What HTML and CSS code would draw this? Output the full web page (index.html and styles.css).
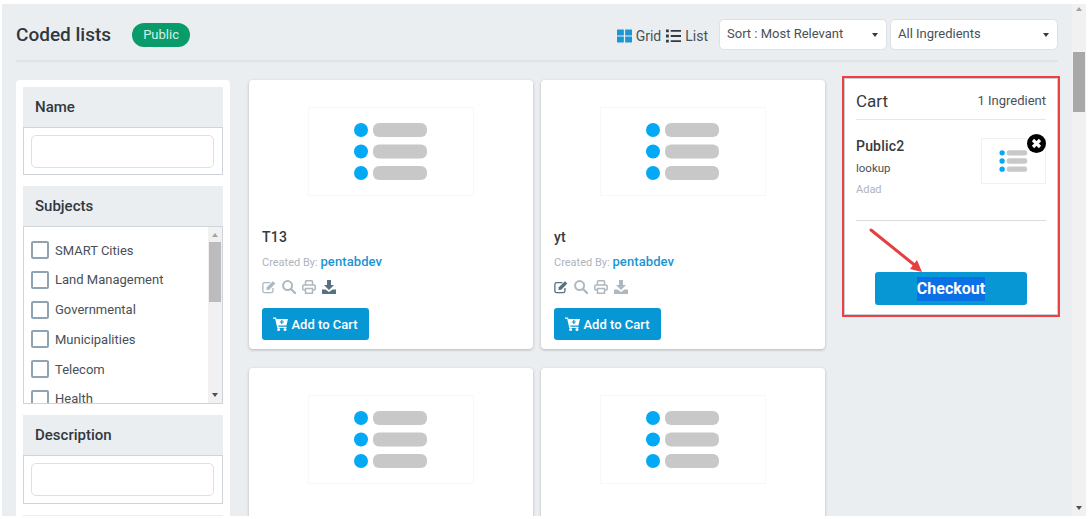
FILE: index.html
```html
<!DOCTYPE html>
<html lang="en">
<head>
<meta charset="utf-8">
<title>Coded lists</title>
<link rel="stylesheet" href="styles.css">
</head>
<body>
<svg class="defs" width="0" height="0" aria-hidden="true">
  <symbol id="thumb" viewBox="0 0 166 89">
    <circle cx="53" cy="23" r="7" fill="#03a9f4"/>
    <circle cx="53" cy="44.500" r="7" fill="#03a9f4"/>
    <circle cx="53" cy="66" r="7" fill="#03a9f4"/>
    <rect x="65" y="16" width="54" height="14" rx="6" fill="#c8c8c8"/>
    <rect x="65" y="37.500" width="54" height="14" rx="6" fill="#c8c8c8"/>
    <rect x="65" y="59" width="54" height="14" rx="6" fill="#c8c8c8"/>
  </symbol>
  <symbol id="i-edit" viewBox="0 0 16 14">
    <path d="M9.500 2H3a2 2 0 0 0-2 2v7.500a2 2 0 0 0 2 2h7.500a2 2 0 0 0 2-2V8" fill="none" stroke="currentColor" stroke-width="1.500"/>
    <path d="M5.500 7.200 12.500.4l2.700 2.700-6.900 6.900-3.200.5z" fill="currentColor"/>
  </symbol>
  <symbol id="i-search" viewBox="0 0 14 14">
    <circle cx="5.600" cy="5.600" r="4.500" fill="none" stroke="currentColor" stroke-width="2"/>
    <path d="m9 9 4 4" stroke="currentColor" stroke-width="2.400" stroke-linecap="round"/>
  </symbol>
  <symbol id="i-print" viewBox="0 0 14 14">
    <path d="M3.500 5V1.500a.7.700 0 0 1 .7-.7h5.600a.7.700 0 0 1 .7.700V5M3.500 10H1.800a1 1 0 0 1-1-1V6.200a1.200 1.200 0 0 1 1.200-1.200h10a1.200 1.200 0 0 1 1.200 1.200V9a1 1 0 0 1-1 1h-1.700" fill="none" stroke="currentColor" stroke-width="1.500"/>
    <path d="M3.500 8.500h7v4.700h-7z" fill="none" stroke="currentColor" stroke-width="1.500"/>
  </symbol>
  <symbol id="i-down" viewBox="0 0 14 14">
    <path d="M5 0h4v5h3L7 10 2 5h3z" fill="currentColor"/>
    <path d="M0 9.500h3.500L7 12l3.500-2.500H14V14H0z" fill="currentColor"/>
  </symbol>
  <symbol id="i-cart" viewBox="0 0 15 14">
    <path d="M0 .5h3l.5 1.500H15l-1.600 6.500H5.200l.3 1.300h8v1.200H4.300L2.200 1.800H0z" fill="currentColor"/>
    <circle cx="5.600" cy="12.500" r="1.500" fill="currentColor"/>
    <circle cx="12" cy="12.500" r="1.500" fill="currentColor"/>
    <path d="M8.800 3v4M6.800 5h4" stroke="#0897d5" stroke-width="1.200"/>
  </symbol>
</svg>

<div class="window">
  <main class="page">
    <header class="topbar">
      <h1 class="title">Coded lists</h1>
      <span class="badge">Public</span>
      <div class="views">
        <span class="view">
          <svg class="view-icon" viewBox="0 0 16 14" aria-hidden="true"><path d="M0 0h7.300v6.500H0zM8.700 0H16v6.500H8.700zM0 7.500h7.300V14H0zM8.700 7.500H16V14H8.700z" fill="#1b95d4"/></svg>
          Grid
        </span>
        <span class="view">
          <svg class="view-icon" viewBox="0 0 16 14" aria-hidden="true"><path d="M0 0h3v3H0zM0 5.500h3v3H0zM0 11h3v3H0zM5 .500h11v2H5zM5 6h11v2H5zM5 11.500h11v2H5z" fill="#343a40"/></svg>
          List
        </span>
      </div>
      <div class="select select-sort">Sort : Most Relevant</div>
      <div class="select select-all">All Ingredients</div>
    </header>

    <div class="columns">
      <aside class="filters">
        <section class="filter">
          <h2 class="filter-head">Name</h2>
          <div class="filter-box filter-box-first"><input class="field" type="text" aria-label="Name"></div>
        </section>
        <section class="filter">
          <h2 class="filter-head">Subjects</h2>
          <div class="check-box">
            <ul class="checks">
              <li class="check"><span class="tick"></span>SMART Cities</li>
              <li class="check"><span class="tick"></span>Land Management</li>
              <li class="check"><span class="tick"></span>Governmental</li>
              <li class="check"><span class="tick"></span>Municipalities</li>
              <li class="check"><span class="tick"></span>Telecom</li>
              <li class="check"><span class="tick"></span>Health</li>
            </ul>
            <div class="mini-scroll">
              <span class="arrow-up"></span>
              <span class="mini-thumb"></span>
              <span class="arrow-down arrow-end"></span>
            </div>
          </div>
        </section>
        <section class="filter">
          <h2 class="filter-head">Description</h2>
          <div class="filter-box"><input class="field" type="text" aria-label="Description"></div>
        </section>
        <section class="filter">
          <div class="filter-head"></div>
        </section>
      </aside>

      <div class="cards">
        <article class="card">
          <svg class="thumb"><use href="#thumb"/></svg>
          <h3 class="card-name">T13</h3>
          <p class="byline">Created By: <a class="author">pentabdev</a></p>
          <div class="tools">
            <svg class="tool tool-edit"><use href="#i-edit"/></svg>
            <svg class="tool"><use href="#i-search"/></svg>
            <svg class="tool"><use href="#i-print"/></svg>
            <svg class="tool on"><use href="#i-down"/></svg>
          </div>
          <button class="add" type="button"><svg class="add-icon"><use href="#i-cart"/></svg>Add to Cart</button>
        </article>
        <article class="card">
          <svg class="thumb"><use href="#thumb"/></svg>
          <h3 class="card-name">yt</h3>
          <p class="byline">Created By: <a class="author">pentabdev</a></p>
          <div class="tools">
            <svg class="tool tool-edit on"><use href="#i-edit"/></svg>
            <svg class="tool"><use href="#i-search"/></svg>
            <svg class="tool"><use href="#i-print"/></svg>
            <svg class="tool"><use href="#i-down"/></svg>
          </div>
          <button class="add" type="button"><svg class="add-icon"><use href="#i-cart"/></svg>Add to Cart</button>
        </article>
        <article class="card">
          <svg class="thumb"><use href="#thumb"/></svg>
        </article>
        <article class="card">
          <svg class="thumb"><use href="#thumb"/></svg>
        </article>
      </div>

      <section class="cart-mark">
        <div class="cart">
          <div class="cart-head">
            <h2 class="cart-title">Cart</h2>
            <span class="cart-count">1 Ingredient</span>
          </div>
          <div class="cart-item">
            <div class="cart-text">
              <h3 class="item-name">Public2</h3>
              <p class="item-type">lookup</p>
              <p class="item-owner">Adad</p>
            </div>
            <div class="item-thumb">
              <svg class="item-svg"><use href="#thumb"/></svg>
              <span class="remove">
                <svg viewBox="0 0 19 19" width="19" height="19" aria-hidden="true"><circle cx="9.500" cy="9.500" r="9.500" fill="#000"/><path d="m6 6 7 7m0-7-7 7" stroke="#fff" stroke-width="3.200"/></svg>
              </span>
            </div>
          </div>
          <button class="checkout" type="button"><span class="selected">Checkout</span></button>
        </div>
        <svg class="pointer" viewBox="0 0 60 50" width="60" height="50" aria-hidden="true">
          <path d="M2 2 48 39" stroke="#e5403f" stroke-width="3" stroke-linecap="round"/>
          <path d="M53 44 41 41 48 32z" fill="#e5403f"/>
        </svg>
      </section>
    </div>
  </main>

  <div class="scrollbar">
    <span class="arrow-up arrow-main"></span>
    <span class="main-thumb"></span>
    <span class="arrow-down arrow-main arrow-end"></span>
  </div>
</div>
</body>
</html>
```
FILE: styles.css
```css
* { box-sizing: border-box; }

html, body {
  margin: 0;
  height: 100%;
  background: #fff;
  overflow: hidden;
}

body {
  font-family: Roboto, "Liberation Sans", sans-serif;
  color: #343a40;
  font-size: 14px;
}

.defs { position: absolute; }

.window {
  display: flex;
  height: 512px;
  margin: 4px 4px 0 2px;
}

.page {
  flex: 1;
  min-width: 0;
  background: #ebeef1;
  padding: 0 14px;
  overflow: hidden;
}

.scrollbar {
  flex: none;
  width: 14px;
  background: #f1f1f1;
  display: flex;
  flex-direction: column;
  align-items: center;
  padding-top: 3px;
}

.arrow-up, .arrow-down {
  display: block;
  width: 0;
  height: 0;
  border-left: 3.500px solid transparent;
  border-right: 3.500px solid transparent;
}
.arrow-up { border-bottom: 4px solid #a3a3a3; }
.arrow-down { border-top: 4px solid #505050; }
.arrow-end { margin-top: auto; }
.arrow-main.arrow-end { margin-bottom: 6px; }

.main-thumb {
  display: block;
  width: 12px;
  height: 60px;
  margin-top: 41px;
  background: #a8a8a8;
}

.topbar {
  display: flex;
  align-items: center;
  height: 58px;
  padding-top: 5px;
  border-bottom: 2px solid #dfe3e6;
}

.title {
  margin: 0;
  font-size: 19px;
  font-weight: 500;
  line-height: 24px;
  color: #2f3840;
}

.badge {
  margin-left: 21px;
  width: 58px;
  height: 24px;
  border-radius: 12px;
  background: #0a9b6a;
  color: #d5f2e7;
  text-align: center;
  line-height: 23px;
  font-size: 13px;
}

.views {
  margin-left: auto;
  display: flex;
  gap: 5px;
  margin-top: 2px;
  font-size: 14px;
  color: #495057;
}

.view {
  display: flex;
  align-items: center;
  gap: 4px;
}

.view-icon {
  width: 15px;
  height: 14px;
}

.select {
  position: relative;
  height: 31px;
  background: #fff;
  border: 1px solid #dde1e5;
  border-radius: 5px;
  padding-left: 7px;
  line-height: 28px;
  font-size: 13px;
  color: #495057;
}

.select::after {
  content: "";
  position: absolute;
  right: 8px;
  top: 13px;
  border-left: 3.500px solid transparent;
  border-right: 3.500px solid transparent;
  border-top: 4px solid #343a40;
}

.select-sort {
  width: 168px;
  margin-left: 11px;
}

.select-all {
  width: 168px;
  margin-left: 3px;
}

.columns {
  display: flex;
  align-items: flex-start;
  gap: 19px;
  margin-top: 18px;
  width: 1044px;
}

.filters {
  flex: none;
  width: 214px;
  padding: 7px 7px 0;
  background: #fff;
  border-radius: 4px;
  display: flex;
  flex-direction: column;
  gap: 11px;
}

.filter-head {
  margin: 0;
  height: 40px;
  padding-left: 12px;
  background: #ebeef1;
  font-size: 15px;
  font-weight: 500;
  line-height: 40px;
  color: #2f3840;
}

.filter-box {
  height: 49px;
  padding: 7px 8px 7px 7px;
  border: 1px solid #ced4da;
}

.filter-box-first { height: 48px; }

.field {
  display: block;
  width: 100%;
  height: 33px;
  border: 1px solid #dde1e5;
  border-radius: 5px;
  background: #fff;
}

.check-box {
  display: flex;
  height: 178px;
  border: 1px solid #ced4da;
  overflow: hidden;
}

.checks {
  flex: 1;
  list-style: none;
  margin: 0;
  padding: 14px 0 0 7px;
}

.check {
  display: flex;
  align-items: center;
  gap: 6px;
  height: 18px;
  margin-bottom: 11.750px;
  font-size: 13px;
  color: #495057;
}

.tick {
  flex: none;
  width: 18px;
  height: 18px;
  border: 2px solid #8fa3b3;
  border-radius: 2px;
  background: #fff;
}

.mini-scroll {
  flex: none;
  width: 14px;
  background: #f1f1f1;
  display: flex;
  flex-direction: column;
  align-items: center;
  padding-top: 6px;
}

.mini-thumb {
  display: block;
  width: 12px;
  height: 60px;
  margin-top: 5px;
  background: #bcbcbc;
}

.mini-scroll .arrow-end { margin-bottom: 6px; }

.cards {
  flex: none;
  width: 576px;
  display: grid;
  grid-template-columns: 284px 284px;
  column-gap: 8px;
  row-gap: 19px;
}

.card {
  height: 269px;
  padding: 27px 13px 0;
  background: #fff;
  border-radius: 4px;
  box-shadow: 0 1px 3px rgba(73, 80, 87, .35);
}

.thumb {
  display: block;
  width: 166px;
  height: 89px;
  margin: 0 auto;
  outline: 1px solid #f7f8f8;
  outline-offset: -1px;
}

.card-name {
  margin: 32px 0 0;
  font-size: 14px;
  font-weight: 500;
  line-height: 18px;
  letter-spacing: .2px;
  color: #343a40;
}

.byline {
  margin: 7px 0 0;
  font-size: 11px;
  line-height: 18px;
  color: #adb5bd;
}

.author {
  font-size: 13px;
  font-weight: 500;
  letter-spacing: .1px;
  color: #1b95d4;
}

.tools {
  display: flex;
  align-items: center;
  gap: 6px;
  margin-top: 7px;
  height: 16px;
  color: #adb8c0;
}

.tool {
  width: 14px;
  height: 14px;
}
.tool.on { color: #56717f; }

.add {
  display: flex;
  align-items: center;
  justify-content: center;
  gap: 3px;
  width: 107px;
  height: 32px;
  margin-top: 13px;
  border: 0;
  border-radius: 3px;
  background: #0897d5;
  color: #fff;
  font-family: inherit;
  font-size: 13px;
  font-weight: 500;
}

.add-icon {
  width: 15px;
  height: 14px;
}

.cart-mark {
  position: relative;
  flex: none;
  width: 218px;
  height: 241px;
  margin-top: -4px;
  margin-left: -2px;
  border: 2px solid #ee4145;
  padding: 1px;
  background: #c9cdd0;
}

.cart {
  height: 100%;
  padding: 10px 11px 0;
  background: #fff;
}

.cart-head {
  display: flex;
  align-items: flex-start;
  justify-content: space-between;
  height: 31px;
  border-bottom: 1px solid #e3e7ea;
}

.cart-title {
  margin: 0;
  font-size: 17px;
  font-weight: 400;
  line-height: 24px;
  color: #343a40;
}

.cart-count {
  font-size: 13px;
  line-height: 24px;
  color: #495057;
}

.cart-item {
  display: flex;
  justify-content: space-between;
  height: 101px;
  padding-top: 18px;
  border-bottom: 1px solid #dadde0;
}

.item-name {
  margin: 0;
  font-size: 14px;
  font-weight: 500;
  line-height: 17px;
  letter-spacing: .2px;
  color: #343a40;
}

.item-type {
  margin: 5px 0 0;
  font-size: 11.500px;
  line-height: 16px;
  color: #495057;
}

.item-owner {
  margin: 6px 0 0;
  font-size: 11px;
  line-height: 16px;
  color: #adb5bd;
}

.item-thumb {
  position: relative;
  width: 65px;
  height: 46px;
  border: 1px solid #f0f1f2;
}

.item-svg {
  display: block;
  width: 63px;
  height: 44px;
}

.remove {
  position: absolute;
  top: -5px;
  right: -1px;
  width: 19px;
  height: 19px;
}
.remove svg { display: block; }

.checkout {
  display: block;
  width: 152px;
  height: 33px;
  margin: 51px 0 0 19px;
  border: 0;
  border-radius: 3px;
  background: #0897d5;
  font-family: inherit;
  font-size: 16px;
  font-weight: 700;
  color: #fff;
}

.selected {
  display: inline-block;
  height: 24px;
  line-height: 24px;
  background: #0a70e6;
}

.pointer {
  position: absolute;
  left: 25px;
  top: 150px;
}
```
